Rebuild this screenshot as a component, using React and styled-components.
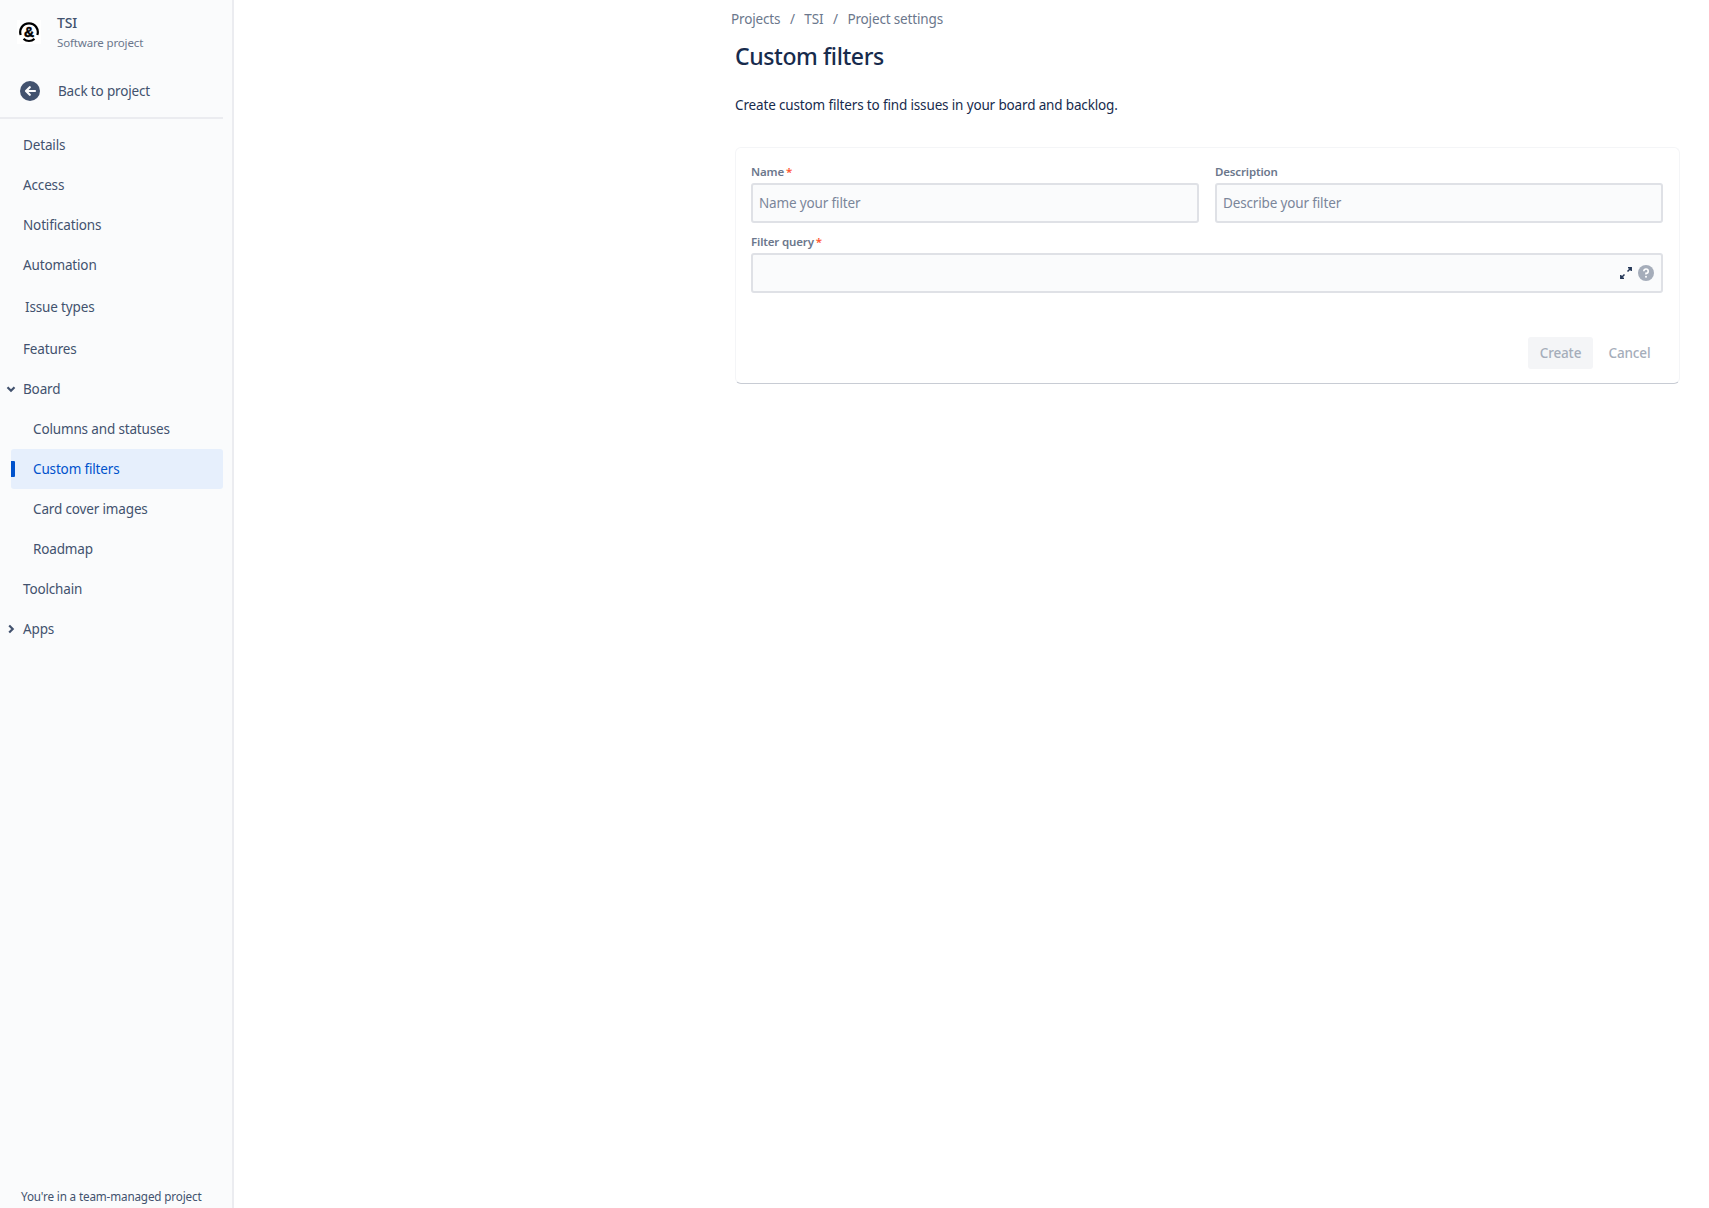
import styled, { createGlobalStyle } from 'styled-components';

const GlobalStyle = createGlobalStyle`
  html, body {
    margin: 0;
    padding: 0;
    height: 100%;
    background: #ffffff;
    font-family: "Noto Sans", "Open Sans", sans-serif;
    font-size: 13.5px;
    letter-spacing: -0.15px;
    color: #172b4d;
  }
  #root { height: 100%; }
  * { box-sizing: border-box; }
`;

const Page = styled.div`
  display: flex;
  height: 1208px;
  overflow: hidden;
`;

const Sidebar = styled.aside`
  width: 234px;
  flex-shrink: 0;
  display: flex;
  flex-direction: column;
  background: #fafbfc;
  border-right: 2px solid #ebecf0;
`;

const ProjectHeader = styled.div`
  height: 64px;
  padding: 14px 0 0 17px;
  display: flex;
  gap: 16px;
`;

const ProjectLogo = styled.div`
  width: 24px;
  height: 24px;
  margin-top: 6px;
  background: #ffffff;
  display: flex;
  align-items: center;
  justify-content: center;
`;

const ProjectName = styled.div`
  font-size: 14px;
  line-height: 18px;
  font-weight: 500;
  color: #42526e;
`;

const ProjectType = styled.div`
  font-size: 11.5px;
  line-height: 16px;
  margin-top: 3px;
  color: #6b778c;
`;

const BackRow = styled.div`
  height: 55px;
  width: 223px;
  padding: 0 0 0 20px;
  display: flex;
  align-items: center;
  gap: 18px;
  color: #42526e;
  border-bottom: 2px solid #ebecf0;
`;

const NavList = styled.nav`
  display: flex;
  flex-direction: column;
  padding-top: 6px;
`;

const NavItem = styled.div`
  position: relative;
  height: 40px;
  width: 212px;
  margin-left: 11px;
  padding-left: ${props => (props.$sub ? 22 : props.$shift ? 14 : 12)}px;
  padding-bottom: 1px;
  margin-top: ${props => props.$gap || 0}px;
  display: flex;
  align-items: center;
  border-radius: 3px;
  color: ${props => (props.$active ? '#0052cc' : '#42526e')};
  background: ${props => (props.$active ? '#e6effc' : 'transparent')};
`;

const ActiveMark = styled.span`
  position: absolute;
  left: 0;
  top: 12px;
  width: 4px;
  height: 16px;
  border-radius: 0 1px 1px 0;
  background: #0052cc;
`;

const Caret = styled.svg`
  position: absolute;
  left: -5px;
  top: 15px;
  width: 10px;
  height: 10px;
`;

const SidebarFooter = styled.div`
  margin-top: auto;
  padding: 0 0 4px 21px;
  font-size: 11.7px;
  line-height: 16px;
  color: #42526e;
`;

const Main = styled.main`
  flex: 1;
  padding: 10px 29px 0 501px;
`;

const Breadcrumbs = styled.div`
  display: flex;
  margin-left: -4px;
  line-height: 18px;
  color: #6b778c;
`;

const Slash = styled.span`
  width: 24px;
  text-align: center;
`;

const Title = styled.h1`
  margin: 14px 0 0;
  font-size: 23px;
  letter-spacing: -0.4px;
  line-height: 28px;
  font-weight: 500;
  color: #172b4d;
`;

const Intro = styled.p`
  margin: 25px 0 0;
  line-height: 20px;
  color: #172b4d;
`;

const Card = styled.section`
  margin-top: 32px;
  height: 237px;
  padding: 14px 16px 0 15px;
  border-radius: 6px;
  background: #ffffff;
  border: 1px solid #f4f5f7;
  border-bottom: 1px solid #c8ccd4;
`;

const FieldRow = styled.div`
  display: flex;
  gap: 16px;
`;

const Field = styled.div`
  flex: 1;
  min-width: 0;
`;

const Label = styled.label`
  display: block;
  padding-top: 1px;
  font-size: 11.5px;
  line-height: 18px;
  font-weight: 600;
  color: #6b778c;
`;

const Required = styled.span`
  color: #ff5630;
  margin-left: 2px;
`;

const InputBox = styled.div`
  height: 40px;
  margin: 2px 0 9px;
  padding: 0 6px;
  display: flex;
  align-items: center;
  justify-content: space-between;
  background: #fafbfc;
  border: 2px solid #dfe1e6;
  border-radius: 3px;
  color: #7a869a;
`;

const InputIcons = styled.div`
  margin-left: auto;
  display: flex;
  align-items: center;
  gap: 5px;
  margin-right: 1px;
`;

const Actions = styled.div`
  display: flex;
  justify-content: flex-end;
  align-items: center;
  margin-top: 44px;
  gap: 4px;
  padding-right: 1px;
`;

const Button = styled.button`
  height: 32px;
  width: ${props => props.$width}px;
  padding: 0;
  border: none;
  border-radius: 3px;
  font: inherit;
  letter-spacing: inherit;
  font-weight: 500;
  color: #a5adba;
  background: ${props => (props.$filled ? '#f4f5f7' : 'transparent')};
`;

const navTop = [
  { label: 'Details' },
  { label: 'Access' },
  { label: 'Notifications' },
  { label: 'Automation' },
  { label: 'Issue types', shift: true, gap: 2 },
  { label: 'Features', gap: 2 },
];

const boardItems = ['Columns and statuses', 'Custom filters', 'Card cover images', 'Roadmap'];

const App = () => (
  <>
    <GlobalStyle />
    <Page>
      <Sidebar>
        <ProjectHeader>
          <ProjectLogo>
            <svg width="22" height="22" viewBox="0 0 22 22">
              <path d="M2.7 14A8.8 8.8 0 1 1 19.3 14M5.5 17.9A8.8 8.8 0 0 0 16.5 17.9" fill="none" stroke="#000" strokeWidth="2.2" />
              <text x="11" y="16" fontSize="14" fontWeight="700" textAnchor="middle" stroke="#000" strokeWidth="0.5" fontFamily="Liberation Sans, sans-serif">&amp;</text>
            </svg>
          </ProjectLogo>
          <div>
            <ProjectName>TSI</ProjectName>
            <ProjectType>Software project</ProjectType>
          </div>
        </ProjectHeader>
        <BackRow>
          <svg width="20" height="20" viewBox="0 0 20 20">
            <circle cx="10" cy="10" r="10" fill="#42526e" />
            <path d="M15 10H6.5M9.8 6.2L6 10l3.8 3.8" fill="none" stroke="#fafbfc" strokeWidth="2.2" strokeLinecap="round" strokeLinejoin="round" />
          </svg>
          Back to project
        </BackRow>
        <NavList>
          {navTop.map(item => (
            <NavItem key={item.label} $shift={item.shift} $gap={item.gap}>{item.label}</NavItem>
          ))}
          <NavItem>
            <Caret viewBox="0 0 10 10">
              <path d="M1.5 3.2L5 6.7l3.5-3.5" fill="none" stroke="#42526e" strokeWidth="2.2" />
            </Caret>
            Board
          </NavItem>
          {boardItems.map(label => (
            <NavItem key={label} $sub $active={label === 'Custom filters'}>
              {label === 'Custom filters' && <ActiveMark />}
              {label}
            </NavItem>
          ))}
          <NavItem>Toolchain</NavItem>
          <NavItem>
            <Caret viewBox="0 0 10 10">
              <path d="M3.2 1.5L6.7 5 3.2 8.5" fill="none" stroke="#42526e" strokeWidth="2.2" />
            </Caret>
            Apps
          </NavItem>
        </NavList>
        <SidebarFooter>You're in a team-managed project</SidebarFooter>
      </Sidebar>
      <Main>
        <Breadcrumbs>
          <span>Projects</span>
          <Slash>/</Slash>
          <span>TSI</span>
          <Slash>/</Slash>
          <span>Project settings</span>
        </Breadcrumbs>
        <Title>Custom filters</Title>
        <Intro>Create custom filters to find issues in your board and backlog.</Intro>
        <Card>
          <FieldRow>
            <Field>
              <Label>Name<Required>*</Required></Label>
              <InputBox>Name your filter</InputBox>
            </Field>
            <Field>
              <Label>Description</Label>
              <InputBox>Describe your filter</InputBox>
            </Field>
          </FieldRow>
          <Field>
            <Label>Filter query<Required>*</Required></Label>
            <InputBox>
              <InputIcons>
                <svg width="14" height="14" viewBox="0 0 14 14">
                  <path d="M8.5 5.5L12 2M9 1.8h3.2V5M5.5 8.5L2 12M1.8 9v3.2H5" fill="none" stroke="#253858" strokeWidth="1.5" />
                </svg>
                <svg width="16" height="16" viewBox="0 0 16 16">
                  <circle cx="8" cy="8" r="8" fill="#a5adba" />
                  <path d="M5.8 6.2A2.2 2.2 0 1 1 8 8.4v1" fill="none" stroke="#fff" strokeWidth="1.6" />
                  <circle cx="8" cy="11.8" r="1" fill="#fff" />
                </svg>
              </InputIcons>
            </InputBox>
          </Field>
          <Actions>
            <Button $filled $width={65}>Create</Button>
            <Button $width={65}>Cancel</Button>
          </Actions>
        </Card>
      </Main>
    </Page>
  </>
);

export default App;
